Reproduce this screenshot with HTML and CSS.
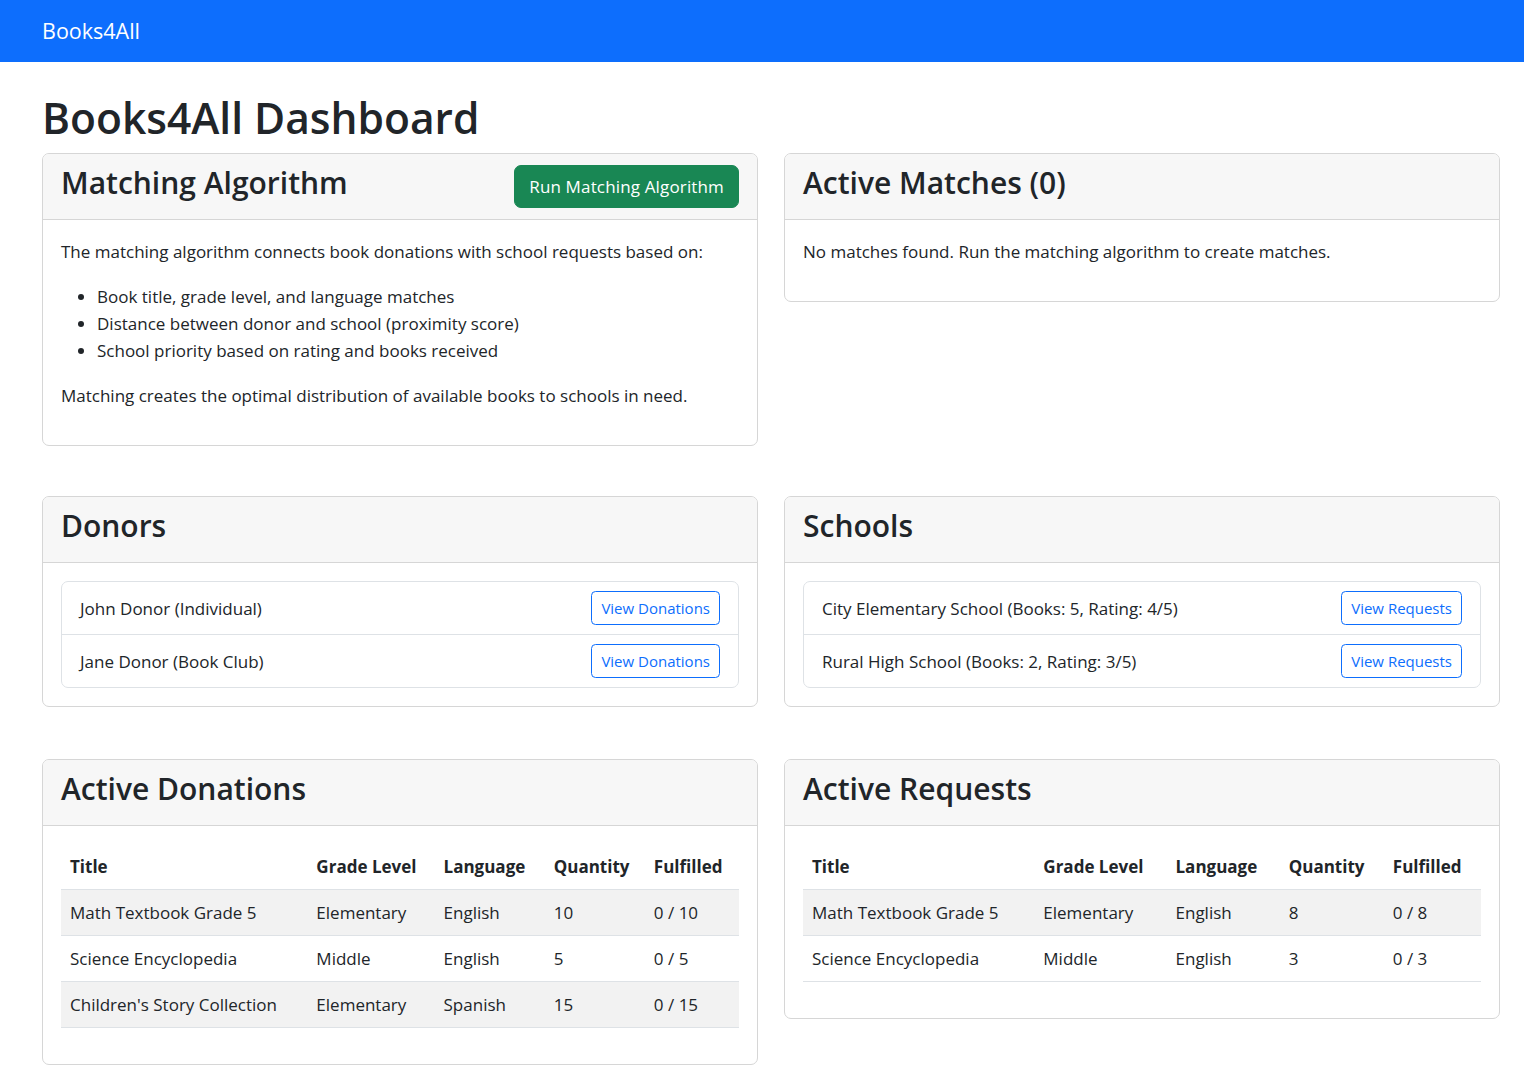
FILE: index.html
```html
<!DOCTYPE html>
<html lang="en">
<head>
<meta charset="utf-8">
<title>Books4All Dashboard</title>
<link rel="stylesheet" href="styles.css">
</head>
<body>
<nav class="navbar">
  <a class="brand" href="#">Books4All</a>
</nav>

<main class="page">
  <h1 class="page-title">Books4All Dashboard</h1>

  <div class="row">
    <section class="card">
      <div class="card-header">
        <h3 class="card-title">Matching Algorithm</h3>
        <button class="btn btn-success">Run Matching Algorithm</button>
      </div>
      <div class="card-body">
        <p>The matching algorithm connects book donations with school requests based on:</p>
        <ul>
          <li>Book title, grade level, and language matches</li>
          <li>Distance between donor and school (proximity score)</li>
          <li>School priority based on rating and books received</li>
        </ul>
        <p>Matching creates the optimal distribution of available books to schools in need.</p>
      </div>
    </section>
    <section class="card">
      <div class="card-header">
        <h3 class="card-title">Active Matches (0)</h3>
      </div>
      <div class="card-body">
        <p>No matches found. Run the matching algorithm to create matches.</p>
      </div>
    </section>
  </div>

  <div class="row">
    <section class="card">
      <div class="card-header">
        <h3 class="card-title">Donors</h3>
      </div>
      <div class="card-body">
        <ul class="list-group">
          <li class="list-item"><span>John Donor (Individual)</span><button class="btn-sm">View Donations</button></li>
          <li class="list-item"><span>Jane Donor (Book Club)</span><button class="btn-sm">View Donations</button></li>
        </ul>
      </div>
    </section>
    <section class="card">
      <div class="card-header">
        <h3 class="card-title">Schools</h3>
      </div>
      <div class="card-body">
        <ul class="list-group">
          <li class="list-item"><span>City Elementary School (Books: 5, Rating: 4/5)</span><button class="btn-sm">View Requests</button></li>
          <li class="list-item"><span>Rural High School (Books: 2, Rating: 3/5)</span><button class="btn-sm">View Requests</button></li>
        </ul>
      </div>
    </section>
  </div>

  <div class="row">
    <section class="card">
      <div class="card-header">
        <h3 class="card-title">Active Donations</h3>
      </div>
      <div class="card-body">
        <table class="table donations">
          <thead>
            <tr><th class="c1">Title</th><th class="c2">Grade Level</th><th class="c3">Language</th><th class="c4">Quantity</th><th class="c5">Fulfilled</th></tr>
          </thead>
          <tbody>
            <tr><td>Math Textbook Grade 5</td><td>Elementary</td><td>English</td><td>10</td><td>0 / 10</td></tr>
            <tr><td>Science Encyclopedia</td><td>Middle</td><td>English</td><td>5</td><td>0 / 5</td></tr>
            <tr><td>Children's Story Collection</td><td>Elementary</td><td>Spanish</td><td>15</td><td>0 / 15</td></tr>
          </tbody>
        </table>
      </div>
    </section>
    <section class="card">
      <div class="card-header">
        <h3 class="card-title">Active Requests</h3>
      </div>
      <div class="card-body">
        <table class="table requests">
          <thead>
            <tr><th class="c1">Title</th><th class="c2">Grade Level</th><th class="c3">Language</th><th class="c4">Quantity</th><th class="c5">Fulfilled</th></tr>
          </thead>
          <tbody>
            <tr><td>Math Textbook Grade 5</td><td>Elementary</td><td>English</td><td>8</td><td>0 / 8</td></tr>
            <tr><td>Science Encyclopedia</td><td>Middle</td><td>English</td><td>3</td><td>0 / 3</td></tr>
          </tbody>
        </table>
      </div>
    </section>
  </div>
</main>
</body>
</html>
```
FILE: styles.css
```css
* { box-sizing: border-box; }

body {
  margin: 0;
  font-family: "Open Sans", "Noto Sans", sans-serif;
  font-size: 17px;
  line-height: 27px;
  color: #212529;
  background: #fff;
}

.navbar {
  height: 62px;
  background: #0d6efd;
  display: flex;
  align-items: center;
  padding: 0 42px;
}

.brand {
  color: #fff;
  text-decoration: none;
  font-size: 21.5px;
  line-height: 30px;
}

.page {
  padding: 0 24px 40px 42px;
}

.page-title {
  margin: 30px 0 9px;
  font-size: 42.5px;
  line-height: 52px;
  font-weight: 600;
}

.row {
  display: grid;
  grid-template-columns: 1fr 1fr;
  column-gap: 26px;
  align-items: start;
}

.row + .row {
  margin-top: 50px;
}

.row + .row + .row {
  margin-top: 52px;
}

.card {
  border: 1px solid #d6d6d6;
  border-radius: 7px;
  background: #fff;
  overflow: hidden;
}

.card-header {
  display: flex;
  justify-content: space-between;
  align-items: center;
  height: 66px;
  padding: 0 18px;
  background: #f7f7f7;
  border-bottom: 1px solid #d6d6d6;
}

.card-title {
  margin: 0 0 7px;
  font-size: 30px;
  line-height: 36px;
  font-weight: 600;
}

.card-body {
  padding: 18px;
}

.card-body p {
  margin: 0 0 18px;
}

.card-body ul {
  margin: 0 0 18px;
  padding-left: 36px;
}

.btn {
  font-family: inherit;
  font-size: 17px;
  line-height: 27px;
  letter-spacing: 0.15px;
  padding: 7px 14px;
  border-radius: 7px;
  border: 1px solid transparent;
  cursor: pointer;
}

.btn-success {
  background: #198754;
  border-color: #198754;
  color: #fff;
}

.card-body .list-group {
  margin: 0;
  padding: 0;
  list-style: none;
  border: 1px solid #dee2e6;
  border-radius: 7px;
}

.list-item {
  display: flex;
  justify-content: space-between;
  align-items: center;
  padding: 9px 18px;
}

.list-item + .list-item {
  border-top: 1px solid #dee2e6;
}

.btn-sm {
  font-family: inherit;
  font-size: 15px;
  line-height: 24px;
  height: 34px;
  padding: 4px 9px;
  color: #0d6efd;
  background: #fff;
  border: 1px solid #0d6efd;
  border-radius: 4.5px;
  cursor: pointer;
}

.table {
  width: 100%;
  border-collapse: collapse;
  table-layout: fixed;
  margin-bottom: 18px;
}

.table th,
.table td {
  padding: 9px;
  text-align: left;
  border-bottom: 1px solid #dee2e6;
  white-space: nowrap;
}

.table th {
  font-weight: 700;
}

.table tbody tr:nth-child(odd) td {
  background: #f2f2f2;
}

.donations .c1 { width: 246px; }
.donations .c2 { width: 127px; }
.donations .c3 { width: 110px; }
.donations .c4 { width: 100px; }
.donations .c5 { width: 94px; }

.requests .c1 { width: 231px; }
.requests .c2 { width: 132px; }
.requests .c3 { width: 113px; }
.requests .c4 { width: 104px; }
.requests .c5 { width: 97px; }
```
